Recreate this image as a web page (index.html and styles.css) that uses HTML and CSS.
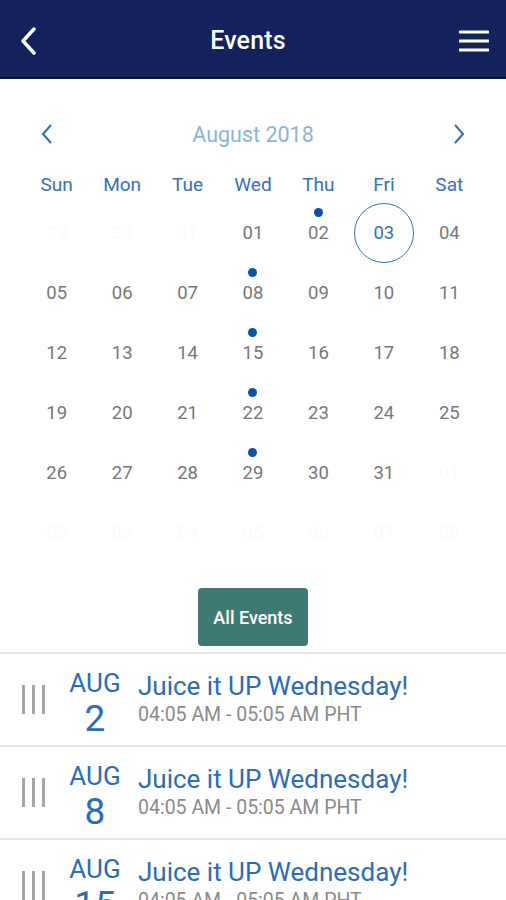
FILE: index.html
```html
<!DOCTYPE html>
<html>
<head>
<meta charset="utf-8">
<link rel="stylesheet" href="styles.css">
</head>
<body>
<header class="topbar">
  <svg class="back" width="18" height="28" viewBox="0 0 18 28"><path d="M15 2 L4 14 L15 26" fill="none" stroke="#fff" stroke-width="3.5" stroke-linecap="round" stroke-linejoin="round"/></svg>
  <h1 class="title">Events</h1>
  <svg class="menu" width="30" height="24" viewBox="0 0 30 24"><path d="M1 3 H29 M1 12 H29 M1 21 H29" stroke="#fff" stroke-width="3" stroke-linecap="round"/></svg>
</header>

<section class="calendar">
  <div class="month-nav">
    <svg width="14" height="22" viewBox="0 0 14 22"><path d="M11 2 L3 11 L11 20" fill="none" stroke="#2f6fb0" stroke-width="2"/></svg>
    <span class="month">August 2018</span>
    <svg width="14" height="22" viewBox="0 0 14 22"><path d="M3 2 L11 11 L3 20" fill="none" stroke="#2f6fb0" stroke-width="2"/></svg>
  </div>
  <div class="grid">
    <div class="wd">Sun</div><div class="wd">Mon</div><div class="wd">Tue</div><div class="wd">Wed</div><div class="wd">Thu</div><div class="wd">Fri</div><div class="wd">Sat</div>

    <div class="day faint">29</div><div class="day faint">30</div><div class="day faint">31</div><div class="day">01</div><div class="day dot">02</div><div class="day today"><span class="ring">03</span></div><div class="day">04</div>
    <div class="day">05</div><div class="day">06</div><div class="day">07</div><div class="day dot">08</div><div class="day">09</div><div class="day">10</div><div class="day">11</div>
    <div class="day">12</div><div class="day">13</div><div class="day">14</div><div class="day dot">15</div><div class="day">16</div><div class="day">17</div><div class="day">18</div>
    <div class="day">19</div><div class="day">20</div><div class="day">21</div><div class="day dot">22</div><div class="day">23</div><div class="day">24</div><div class="day">25</div>
    <div class="day">26</div><div class="day">27</div><div class="day">28</div><div class="day dot">29</div><div class="day">30</div><div class="day">31</div><div class="day faint">01</div>
    <div class="day faint">02</div><div class="day faint">03</div><div class="day faint">04</div><div class="day faint">05</div><div class="day faint">06</div><div class="day faint">07</div><div class="day faint">08</div>
  </div>
  <div class="btn-wrap"><button class="all-btn">All Events</button></div>
</section>

<ul class="events">
  <li class="event">
    <span class="handle"><i></i><i></i><i></i></span>
    <div class="date"><span class="mon">AUG</span><span class="num">2</span></div>
    <div class="info"><div class="name">Juice it UP Wednesday!</div><div class="time">04:05 AM - 05:05 AM PHT</div></div>
  </li>
  <li class="event">
    <span class="handle"><i></i><i></i><i></i></span>
    <div class="date"><span class="mon">AUG</span><span class="num">8</span></div>
    <div class="info"><div class="name">Juice it UP Wednesday!</div><div class="time">04:05 AM - 05:05 AM PHT</div></div>
  </li>
  <li class="event">
    <span class="handle"><i></i><i></i><i></i></span>
    <div class="date"><span class="mon">AUG</span><span class="num">15</span></div>
    <div class="info"><div class="name">Juice it UP Wednesday!</div><div class="time">04:05 AM - 05:05 AM PHT</div></div>
  </li>
</ul>
</body>
</html>
```

FILE: styles.css
```css
* { box-sizing: border-box; }
html, body { margin: 0; padding: 0; }
body {
  width: 506px;
  height: 900px;
  overflow: hidden;
  background: #fff;
  font-family: Roboto, "Liberation Sans", Arial, sans-serif;
}
.topbar {
  height: 79px;
  background: #13225a;
  border-bottom: 2px solid #0b1640;
  display: flex;
  align-items: center;
  justify-content: space-between;
  padding: 4px 17px 0 19px;
}
.title {
  margin: 0;
  color: #fff;
  font-size: 25px;
  font-weight: 500;
  letter-spacing: 0.2px;
}
.back { display: block; }
.menu { display: block; }

.calendar { padding: 0 24px; }
.month-nav {
  height: 48px;
  margin-top: 31px;
  display: flex;
  align-items: center;
  justify-content: space-between;
  padding: 0 16px 0 16px;
}
.month {
  color: #8cb3da;
  font-size: 21.5px;
}
.grid {
  margin-top: 8px;
  display: grid;
  grid-template-columns: repeat(7, 1fr);
  grid-auto-rows: 60px;
  grid-template-rows: 37px;
}
.wd {
  display: flex;
  align-items: center;
  justify-content: center;
  color: #3572b3;
  font-size: 19px;
}
.day {
  position: relative;
  display: flex;
  align-items: center;
  justify-content: center;
  color: #777;
  font-size: 18.5px;
}
.day.faint { color: #fafafa; }
.day.dot::before {
  content: "";
  position: absolute;
  left: 50%;
  top: 5px;
  width: 9px;
  height: 9px;
  margin-left: -4.5px;
  border-radius: 50%;
  background: #0c52a4;
}
.ring {
  width: 60px;
  height: 60px;
  border: 1.5px solid #3572b3;
  border-radius: 50%;
  display: flex;
  align-items: center;
  justify-content: center;
  color: #3572b3;
}
.btn-wrap {
  display: flex;
  justify-content: center;
  margin-top: 25px;
}
.all-btn {
  width: 110px;
  height: 58px;
  border: 0;
  border-radius: 4px;
  background: #3e7a73;
  color: #fff;
  font-family: Roboto, "Liberation Sans", Arial, sans-serif;
  font-size: 18px;
  font-weight: 500;
  padding: 0;
}

.events {
  list-style: none;
  margin: 6px 0 0 0;
  padding: 0;
  border-top: 2px solid #e4e4e4;
}
.event {
  height: 93px;
  border-bottom: 2px solid #e4e4e4;
  display: flex;
  align-items: center;
  padding: 0 0 0 22px;
}
.handle {
  display: flex;
  gap: 7px;
  width: 47px;
  flex: none;
}
.handle i {
  display: block;
  width: 3px;
  height: 29px;
  background: #a6a6a6;
}
.date {
  width: 52px;
  flex: none;
  display: flex;
  flex-direction: column;
  align-items: center;
  color: #2c6cb2;
  line-height: 1;
  margin-top: 8px;
}
.mon { font-size: 26px; }
.num { font-size: 37px; margin-top: 4px; }
.info { margin-left: 17px; margin-top: -2px; }
.name {
  color: #2c6cb2;
  font-size: 26px;
  line-height: 30px;
}
.time {
  color: #8a8a8a;
  font-size: 19.5px;
  line-height: 24px;
  margin-top: 2px;
}
```
